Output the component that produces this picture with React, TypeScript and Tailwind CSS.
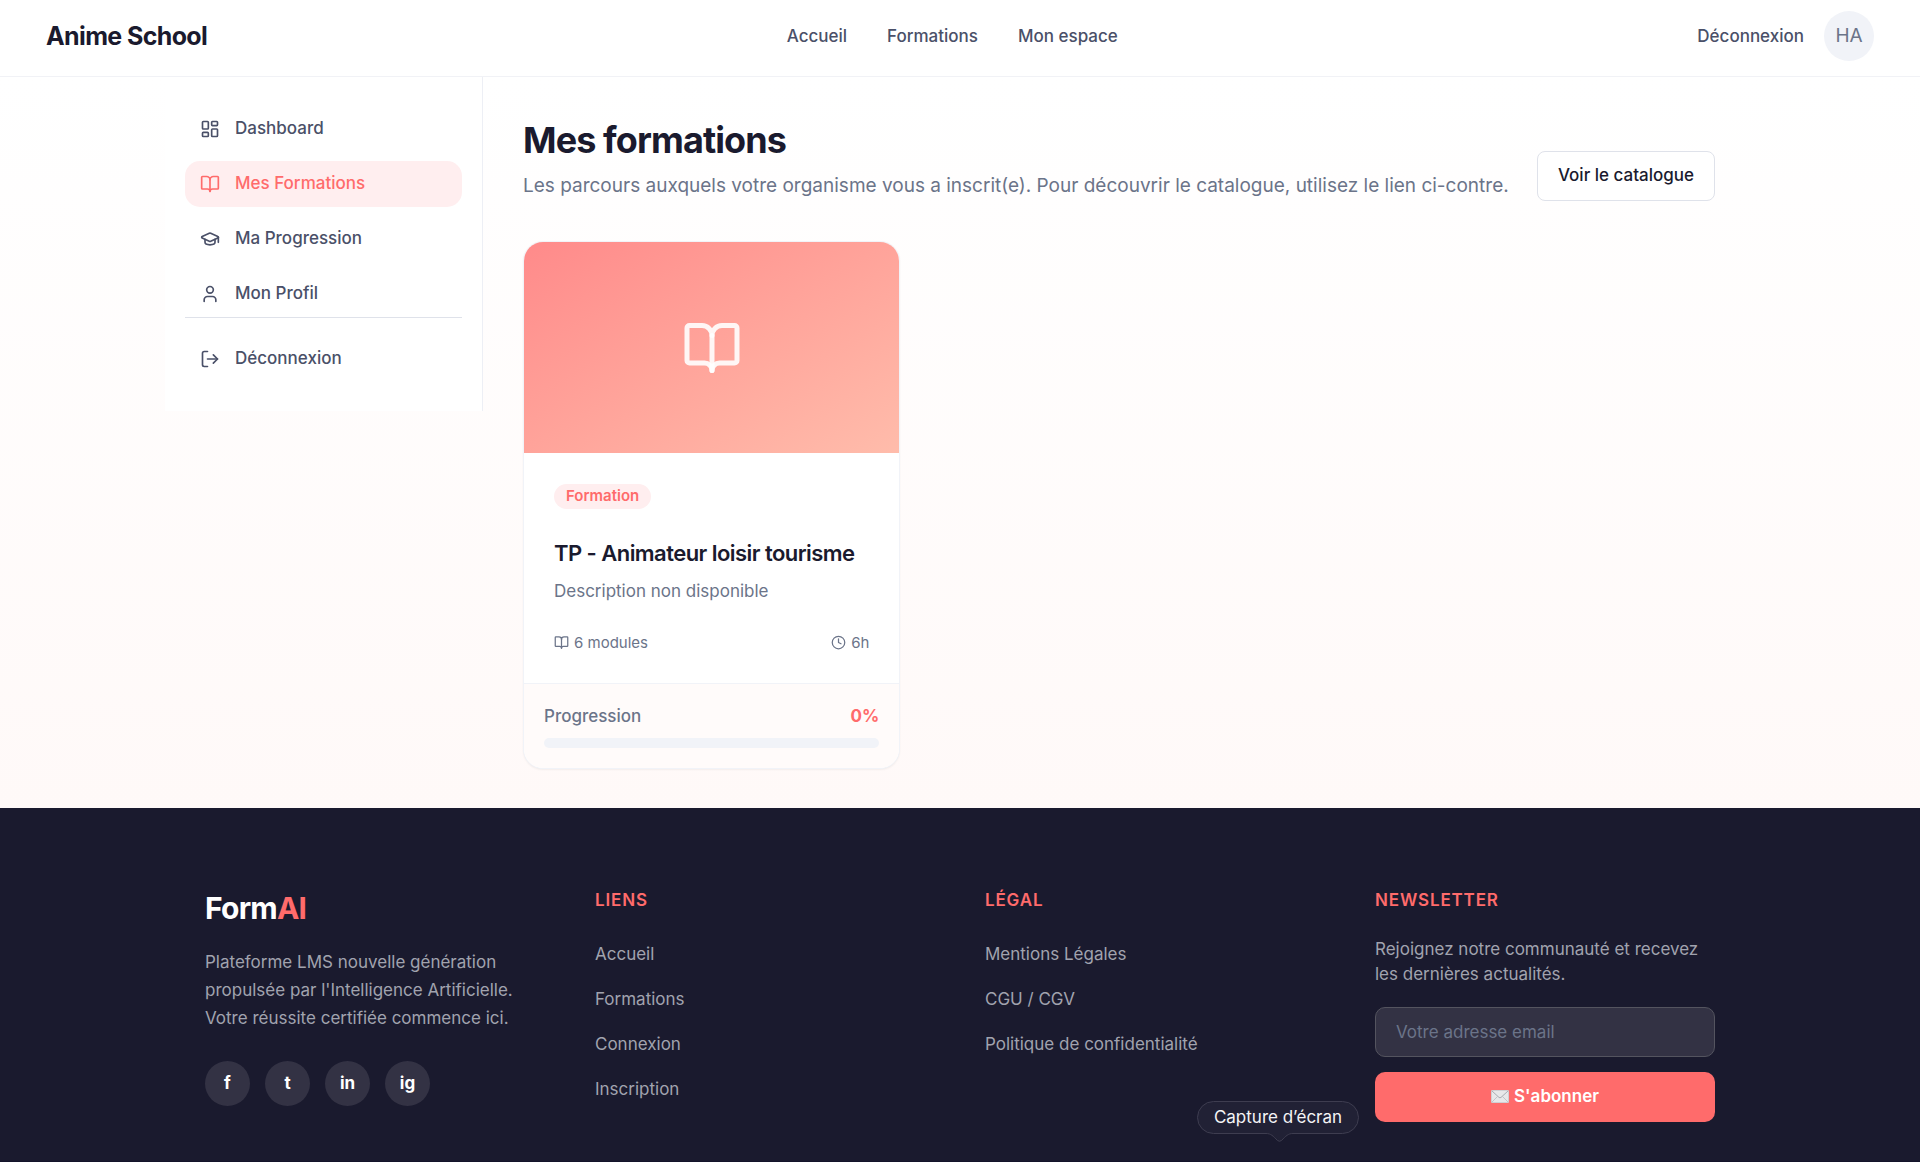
import type { ReactNode } from "react";
import {
  BookOpen,
  Clock,
  GraduationCap,
  LayoutDashboard,
  LogOut,
  User,
} from "lucide-react";

const navLinks = ["Accueil", "Formations", "Mon espace"];

const menu = [
  { id: 1, label: "Dashboard", icon: LayoutDashboard, active: false },
  { id: 2, label: "Mes Formations", icon: BookOpen, active: true },
  { id: 3, label: "Ma Progression", icon: GraduationCap, active: false },
  { id: 4, label: "Mon Profil", icon: User, active: false },
];

const footerColumns = [
  { title: "Liens", links: ["Accueil", "Formations", "Connexion", "Inscription"] },
  { title: "Légal", links: ["Mentions Légales", "CGU / CGV", "Politique de confidentialité"] },
];

const socials = ["f", "t", "in", "ig"];

const Header = () => {
  return (
    <header className="h-[77px] pb-1 px-[46px] flex items-center justify-between bg-white border-b border-[#f1f2f6]">
      <a href="#" className="text-[25px] leading-8 font-bold tracking-tight text-[#1a1a2e]">
        Anime School
      </a>
      <nav className="flex gap-10">
        {navLinks.map((link) => (
          <a key={link} href="#" className="text-[17px] leading-6 font-medium text-[#4a5068]">
            {link}
          </a>
        ))}
      </nav>
      <div className="flex items-center gap-5">
        <button className="text-[17px] leading-6 font-medium text-[#4a5068]">Déconnexion</button>
        <span className="size-[50px] rounded-full bg-[#f1f3f8] flex items-center justify-center text-[19px] leading-7 text-[#6b7489]">
          HA
        </span>
      </div>
    </header>
  );
};

const Sidebar = () => {
  return (
    <aside className="w-[318px] shrink-0 h-[334px] px-5 pt-[29px] bg-white border-r border-[#edeff5]">
      <nav className="flex flex-col gap-[9px]">
        {menu.map((item) => {
          const Icon = item.icon;
          return (
            <a
              key={item.id}
              href="#"
              className={`h-[46px] px-[15px] flex items-center gap-[15px] rounded-[15px] text-[17px] font-medium ${
                item.active ? "bg-[#ffeeef] text-[#ff6b6b]" : "text-[#4a5068]"
              }`}
            >
              <Icon size={20} strokeWidth={2} />
              {item.label}
            </a>
          );
        })}
      </nav>
      <div className="border-t border-[#dfe2ea] pt-[18px]">
        <button className="h-[46px] px-[15px] flex items-center gap-[15px] text-[17px] font-medium text-[#4a5068]">
          <LogOut size={20} strokeWidth={2} />
          Déconnexion
        </button>
      </div>
    </aside>
  );
};

const CourseCard = () => {
  return (
    <article className="rounded-[20px] border border-[#f1f3f8] bg-white overflow-hidden shadow-xs">
      <div className="h-[211px] flex items-center justify-center bg-linear-to-br from-[#ff8a8a] to-[#ffbcab]">
        <BookOpen size={60} strokeWidth={2} className="text-white/90" />
      </div>
      <div className="px-[30px] pt-[30px] pb-[30px]">
        <span className="inline-flex h-[25px] items-center rounded-full bg-[#ffeeef] px-3 text-[15px] font-semibold text-[#ff6b6b]">
          Formation
        </span>
        <h2 className="mt-7 text-[22px] leading-8 font-semibold tracking-tight text-[#1a1a2e]">
          TP - Animateur loisir tourisme
        </h2>
        <p className="mt-2 text-[17px] leading-7 text-[#6b7489]">Description non disponible</p>
        <div className="mt-7 flex justify-between text-[15px] leading-5 text-[#6b7489]">
          <Meta icon={<BookOpen size={15} />} text="6 modules" />
          <Meta icon={<Clock size={15} />} text="6h" />
        </div>
      </div>
      <div className="border-t border-[#f1f3f8] bg-[#fffbfa] p-5">
        <div className="flex justify-between text-[17px] leading-6">
          <span className="font-medium text-[#6b7489]">Progression</span>
          <span className="font-bold text-[#ff6b6b]">0%</span>
        </div>
        <div className="mt-[10px] h-[10px] rounded-full bg-[#f1f3f8]" />
      </div>
    </article>
  );
};

const Meta = ({ icon, text }: { icon: ReactNode; text: string }) => {
  return (
    <span className="flex items-center gap-[5px]">
      {icon}
      {text}
    </span>
  );
};

const Footer = () => {
  return (
    <footer className="relative bg-[#1a1a2e] text-[17px] text-[#a1a3ae]">
      <div className="max-w-[1590px] mx-auto px-10 pt-20 pb-[39px] grid grid-cols-4 gap-[50px]">
        <div>
          <div className="text-[30px] leading-10 font-bold tracking-tight text-white">
            Form<span className="text-[#ff6b6b]">AI</span>
          </div>
          <p className="mt-5 leading-7">
            Plateforme LMS nouvelle génération
            <br />
            propulsée par l'Intelligence Artificielle.
            <br />
            Votre réussite certifiée commence ici.
          </p>
          <div className="mt-[29px] flex gap-[15px]">
            {socials.map((name) => (
              <a
                key={name}
                href="#"
                className="size-[45px] rounded-full bg-[#333244] flex items-center justify-center font-bold text-white"
              >
                {name}
              </a>
            ))}
          </div>
        </div>
        {footerColumns.map((column) => (
          <div key={column.title}>
            <h3 className="leading-6 font-semibold tracking-wider uppercase text-[#ff6b6b]">
              {column.title}
            </h3>
            <ul className="mt-[27px] flex flex-col gap-[15px]">
              {column.links.map((link) => (
                <li key={link} className="leading-[30px]">
                  <a href="#">{link}</a>
                </li>
              ))}
            </ul>
          </div>
        ))}
        <form>
          <h3 className="leading-6 font-semibold tracking-wider uppercase text-[#ff6b6b]">
            Newsletter
          </h3>
          <p className="mt-[25px] leading-[25px]">
            Rejoignez notre communauté et recevez les dernières actualités.
          </p>
          <input
            type="email"
            aria-label="Votre adresse email"
            placeholder="Votre adresse email"
            className="mt-5 h-[50px] w-full rounded-[10px] border border-[#54545f] bg-[#333244] px-5 text-white placeholder:text-[#6b7489]"
          />
          <button
            type="button"
            className="mt-[15px] h-[50px] w-full rounded-[10px] bg-[#ff6b6b] flex items-center justify-center gap-[5px] font-semibold text-white"
          >
            <MailIcon />
            S'abonner
          </button>
        </form>
      </div>
      <div className="h-px bg-[#14142a]" />
      <Tooltip />
    </footer>
  );
};

const MailIcon = () => {
  return (
    <svg width="18" height="13" viewBox="0 0 18 13" fill="none" aria-hidden="true">
      <rect x="0.5" y="0.5" width="17" height="12" rx="0.5" fill="#e8e8ea" stroke="#cfd0d4" />
      <path d="M1 12L6.5 6.5M17 12L11.5 6.5" stroke="#c3c5ca" />
      <path d="M1 1L8 7.4Q9 8.2 10 7.4L17 1" stroke="#a9acb3" />
    </svg>
  );
};

const Tooltip = () => {
  return (
    <div
      role="tooltip"
      className="absolute bottom-5 left-[1197px] flex h-[41px] w-[162px] justify-center text-[17px] leading-8 text-[#f4f4f6]"
    >
      <svg className="absolute inset-0" width="162" height="41" viewBox="0 0 162 41" fill="none" aria-hidden="true">
        <path
          d="M16.500 0.500H145.500A16 16 0 0 1 145.500 32.500H96C91 32.500 89 35 84.500 39.500Q82.500 41 80.500 39.500C76 35 74 32.500 69 32.500H16.500A16 16 0 0 1 16.500 0.500Z"
          fill="#212135"
          stroke="#3e3d50"
        />
      </svg>
      <span className="relative">Capture d’écran</span>
    </div>
  );
};

const App = () => {
  return (
    <div className="min-h-screen bg-[#1a1a2e] font-[Inter,sans-serif]">
      <Header />
      <div className="bg-linear-to-b from-white to-[#fff9f8]">
        <div className="max-w-[1590px] mx-auto flex items-start">
          <Sidebar />
          <main className="flex-1 px-10 pt-10 pb-[39px]">
            <div className="flex items-end justify-between gap-4">
              <div>
                <h1 className="text-4xl leading-[46px] font-bold tracking-tight text-[#1a1a2e]">
                  Mes formations
                </h1>
                <p className="mt-2 text-[19px] leading-[30px] text-[#6b7489]">
                  Les parcours auxquels votre organisme vous a inscrit(e). Pour découvrir le
                  catalogue, utilisez le lien ci-contre.
                </p>
              </div>
              <button className="h-[50px] shrink-0 rounded-lg border border-[#dfe2ea] bg-white px-5 text-[17px] font-medium text-[#1a1a2e]">
                Voir le catalogue
              </button>
            </div>
            <div className="mt-10 grid grid-cols-3 gap-[30px]">
              <CourseCard />
            </div>
          </main>
        </div>
      </div>
      <Footer />
    </div>
  );
};

export default App;
